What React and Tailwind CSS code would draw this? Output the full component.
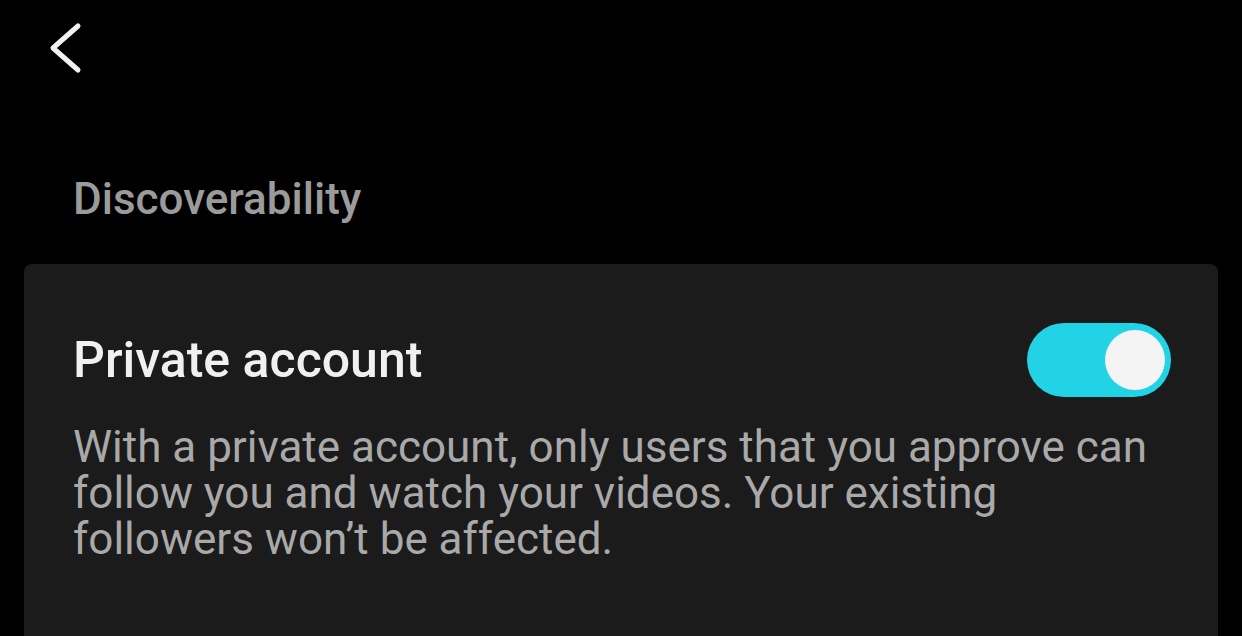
export default function App() {
  return (
    <div className="w-[1242px] h-[636px] overflow-hidden bg-black font-['Roboto',sans-serif]">
      <div className="h-[172px] pt-[20px] pl-[46px]">
        <svg width="40" height="58" viewBox="0 0 40 58" fill="none">
          <path d="M32 6 L7 28 L32 50" stroke="#f2f2f2" strokeWidth="5" strokeLinecap="round" strokeLinejoin="round" />
        </svg>
      </div>
      <div className="pl-[73px] pb-[38px]">
        <h2 className="text-[44px] leading-[54px] font-medium text-[#9b9b9b]">Discoverability</h2>
      </div>
      <div className="mx-[24px] rounded-[8px] bg-[#1b1b1b] h-[400px] pl-[49px] pr-[47px] pt-[59px]">
        <div className="flex items-center justify-between">
          <div className="text-[50px] leading-[60px] font-medium text-[#f0f0f0]">Private account</div>
          <button className="w-[144px] h-[74px] rounded-full bg-[#22d3e6] flex items-center justify-end pr-[6px]">
            <span className="w-[60px] h-[60px] rounded-full bg-[#f4f4f4]" />
          </button>
        </div>
        <p className="mt-[27px] text-[44px] leading-[46px] text-[#a9a9a9] max-w-[1100px]">
          With a private account, only users that you approve can follow you and watch your videos. Your existing followers won’t be affected.
        </p>
      </div>
    </div>
  );
}
